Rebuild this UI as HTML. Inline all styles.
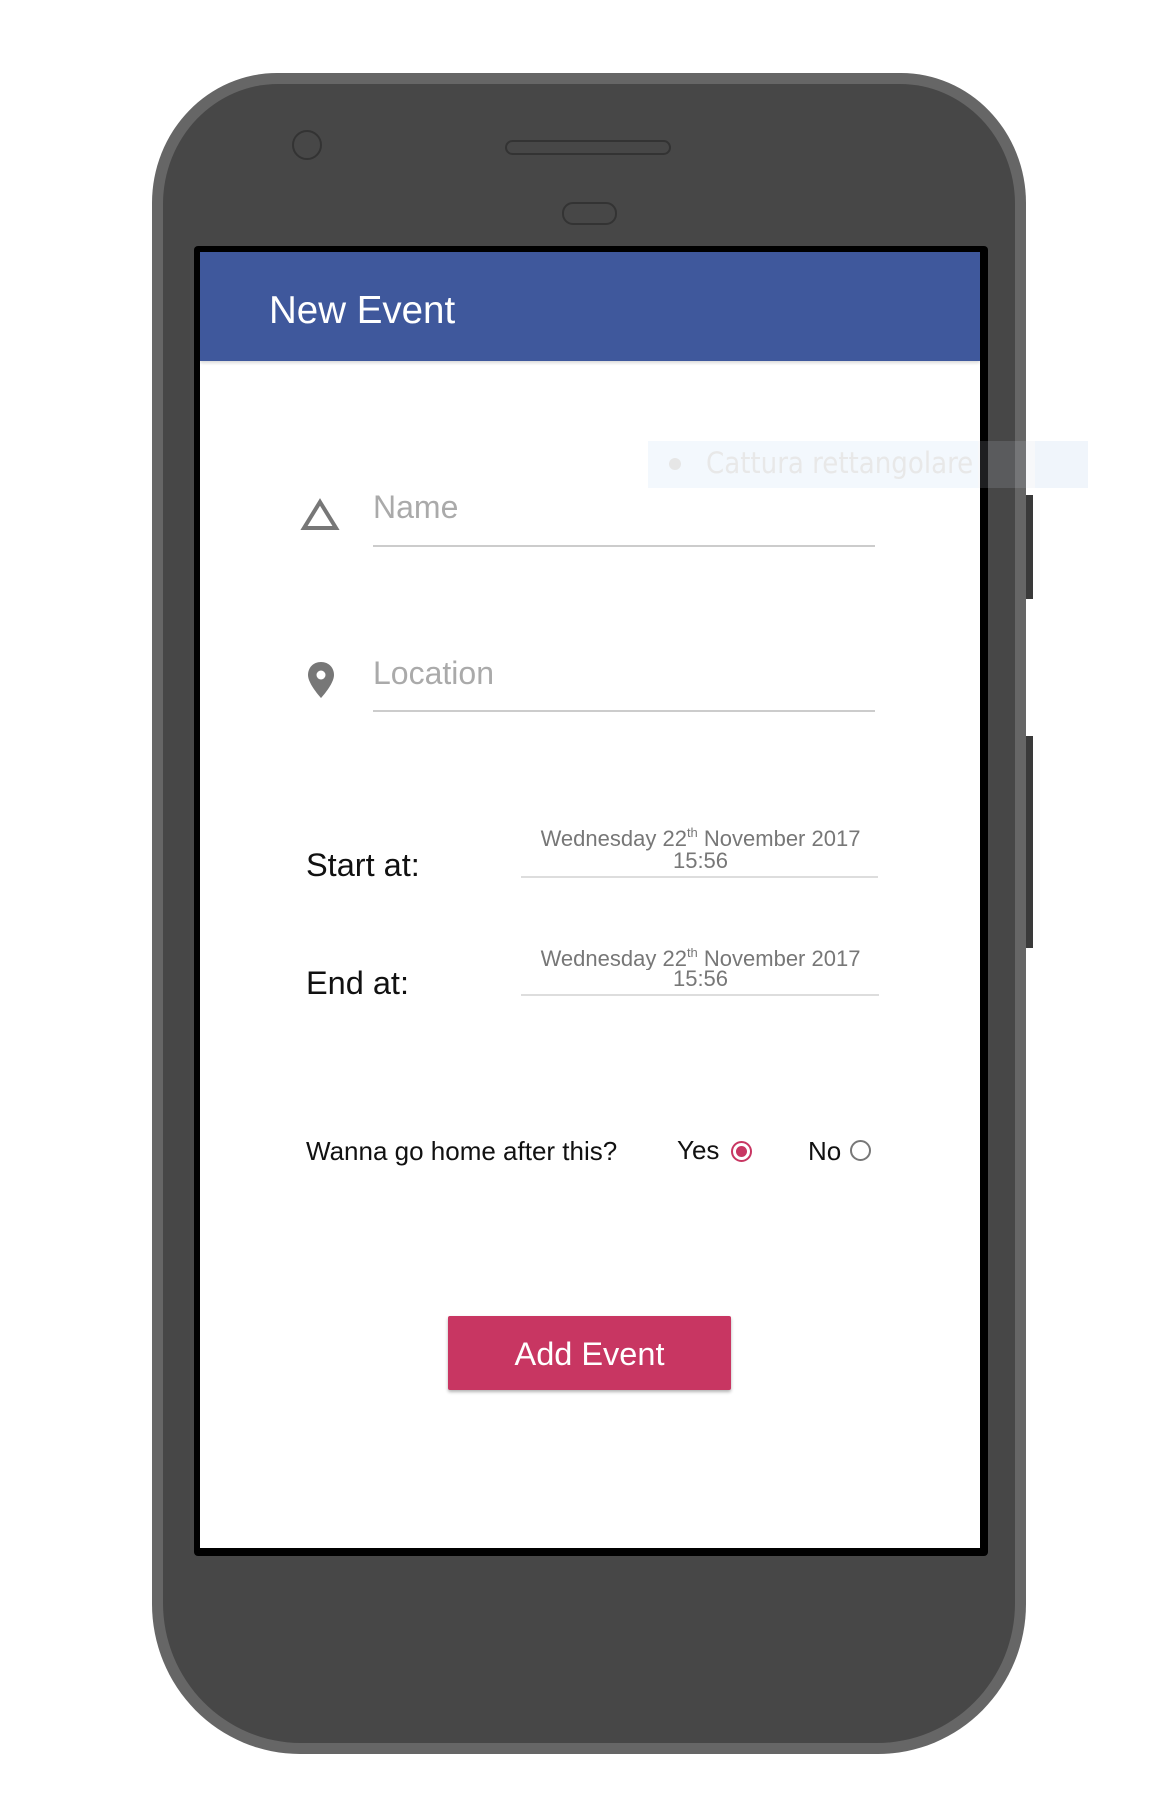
<!DOCTYPE html>
<html><head><meta charset="utf-8"><style>
*{margin:0;padding:0;box-sizing:border-box}
body{width:1166px;height:1799px;background:#fff;position:relative;overflow:hidden;font-family:"Liberation Sans",Arial,sans-serif}
.a{position:absolute}
.t{position:absolute;white-space:nowrap;line-height:1}
</style></head><body>
<div class="a" style="left:1024px;top:495px;width:9px;height:104px;background:#3a3a3a"></div>
<div class="a" style="left:1024px;top:736px;width:9px;height:212px;background:#3a3a3a"></div>
<div class="a" style="left:152px;top:73px;width:874px;height:1681px;background:#666;border-radius:125px 125px 148px 148px / 130px 130px 150px 150px"></div>
<div class="a" style="left:163px;top:84px;width:852px;height:1659px;background:#474747;border-radius:115px 115px 138px 138px / 120px 120px 140px 140px"></div>
<div class="a" style="left:292px;top:130px;width:30px;height:30px;border:2px solid #333;border-radius:50%"></div>
<div class="a" style="left:505px;top:140px;width:166px;height:15px;border:2px solid #333;border-radius:8px"></div>
<div class="a" style="left:562px;top:202px;width:55px;height:23px;border:2px solid #333;border-radius:11px"></div>
<div class="a" style="left:194px;top:246px;width:794px;height:1310px;background:#000;border-radius:4px"></div>
<div class="a" style="left:200px;top:252px;width:780px;height:1296px;background:#fff"></div>
<div class="a" style="left:200px;top:252px;width:780px;height:109px;background:#3f589c;box-shadow:0 2px 3px rgba(0,0,0,.15)"></div>
<div class="t" style="left:269px;top:292px;font-size:38.5px;color:#fff">New Event</div>

<svg class="a" style="left:300px;top:498px" width="40" height="34" viewBox="0 0 40 34"><path d="M20 4 L36 30 L4 30 Z" fill="none" stroke="#777" stroke-width="4" stroke-linejoin="miter"/></svg>
<div class="t" style="left:373px;top:491px;font-size:32px;color:#aaa">Name</div>
<div class="a" style="left:373px;top:545px;width:502px;height:2px;background:#ccc"></div>

<svg class="a" style="left:305px;top:660px" width="32" height="40" viewBox="0 0 32 40"><path d="M16 2 C8 2 3 8 3 15 C3 24 16 38 16 38 C16 38 29 24 29 15 C29 8 24 2 16 2 Z" fill="#777"/><circle cx="16" cy="15" r="4.5" fill="#fff"/></svg>
<div class="t" style="left:373px;top:657px;font-size:32px;color:#aaa">Location</div>
<div class="a" style="left:373px;top:710px;width:502px;height:2px;background:#ccc"></div>

<div class="t" style="left:306px;top:849px;font-size:32.5px;color:#111">Start at:</div>
<div class="t" style="left:522px;width:357px;top:826px;text-align:center;font-size:22px;color:#777">Wednesday 22<sup style="font-size:13px;vertical-align:9px">th</sup> November 2017</div>
<div class="t" style="left:522px;width:357px;top:850px;text-align:center;font-size:22px;color:#777">15:56</div>
<div class="a" style="left:521px;top:876px;width:357px;height:2px;background:#ddd"></div>

<div class="t" style="left:306px;top:967px;font-size:32.5px;color:#111">End at:</div>
<div class="a" style="left:522px;top:948px;width:357px;height:22px;overflow:hidden"><div class="t" style="left:0;width:357px;top:-2px;text-align:center;font-size:22px;color:#777">Wednesday 22<sup style="font-size:13px;vertical-align:9px">th</sup> November 2017</div></div>
<div class="t" style="left:522px;width:357px;top:968px;text-align:center;font-size:22px;color:#777">15:56</div>
<div class="a" style="left:521px;top:994px;width:358px;height:2px;background:#ddd"></div>

<div class="t" style="left:306px;top:1138px;font-size:26px;color:#111">Wanna go home after this?</div>
<div class="t" style="left:677px;top:1137px;font-size:26px;color:#111">Yes</div>
<div class="a" style="left:731px;top:1141px;width:21px;height:21px;border:2px solid #c83662;border-radius:50%"></div>
<div class="a" style="left:736px;top:1146px;width:11px;height:11px;background:#c83662;border-radius:50%"></div>
<div class="t" style="left:808px;top:1138px;font-size:26px;color:#111">No</div>
<div class="a" style="left:850px;top:1140px;width:21px;height:21px;border:2px solid #777;border-radius:50%"></div>

<div class="a" style="left:448px;top:1316px;width:283px;height:74px;background:#c83662;border-radius:2px;box-shadow:0 2px 3px rgba(0,0,0,.3)"></div>
<div class="t" style="left:448px;width:283px;top:1338px;text-align:center;font-size:32.5px;color:#fff">Add Event</div>

<div class="a" style="left:648px;top:441px;width:330px;height:47px;background:rgba(235,244,252,.6)"></div>
<div class="a" style="left:978px;top:441px;width:110px;height:47px;background:rgba(200,210,220,.15)"></div>
<div class="a" style="left:1035px;top:441px;width:53px;height:47px;background:rgba(235,244,252,.6)"></div>
<div class="a" style="left:669px;top:458px;width:12px;height:12px;background:#e6e6e6;border-radius:50%"></div>
<div class="t" style="left:706px;top:449px;font-size:29px;color:#e8e8e8;font-family:'DejaVu Sans Condensed','Liberation Sans',sans-serif">Cattura rettangolare</div>
</body></html>
